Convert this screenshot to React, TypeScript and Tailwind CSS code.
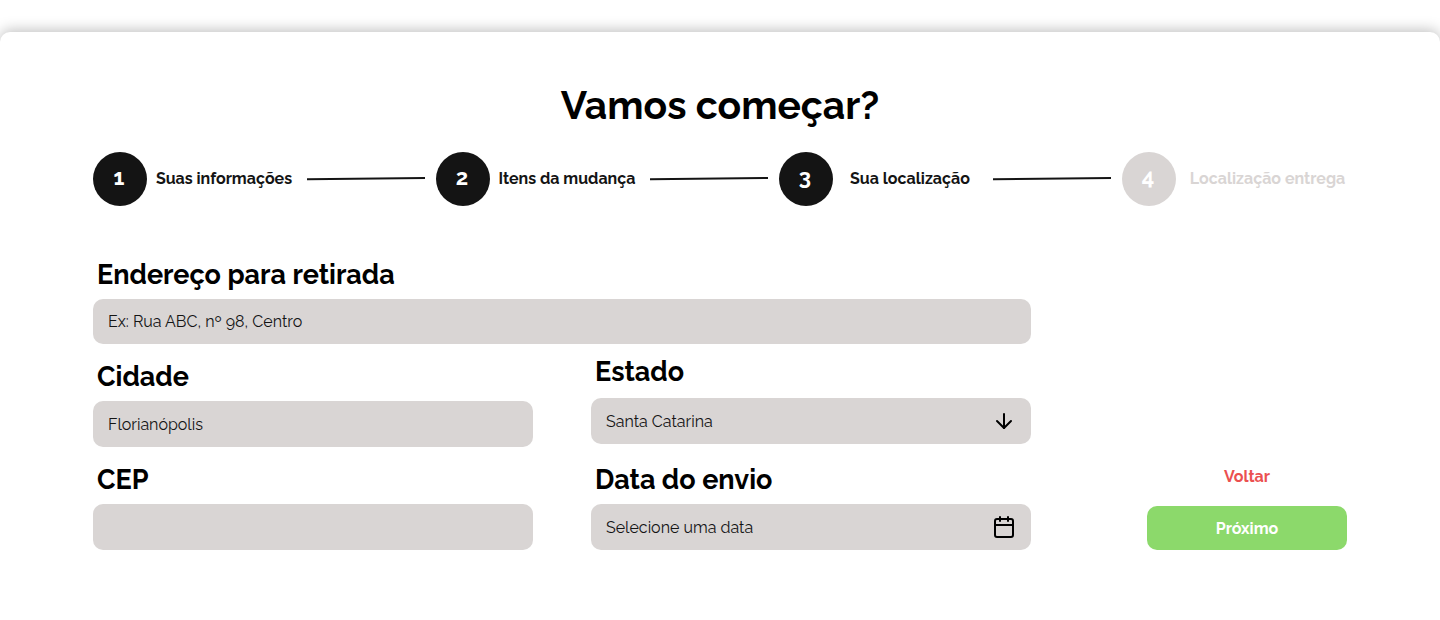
import { ArrowDown, Calendar } from "lucide-react";

type Step = { number: number; label: string; done: boolean };

const steps: Step[] = [
  { number: 1, label: "Suas informações", done: true },
  { number: 2, label: "Itens da mudança", done: true },
  { number: 3, label: "Sua localização", done: true },
  { number: 4, label: "Localização entrega", done: false },
];

const fieldClass =
  "h-[46px] w-full rounded-[10px] bg-[#d9d5d4] px-[15px] text-base text-[#141414] placeholder:text-[#141414] placeholder:opacity-100 outline-offset-2";
const labelClass = "pl-1 text-[27px] leading-8 font-bold text-black";

function Stepper() {
  return (
    <ol className="mt-[22px] flex items-center">
      {steps.map((step, index) => {
        const last = index === steps.length - 1;
        return (
          <li
            key={step.number}
            aria-current={step.number === 3 ? "step" : undefined}
            className={last ? "flex w-[225px] items-center" : "flex flex-1 items-center"}
          >
            <span
              className={
                step.done
                  ? "flex size-[54px] shrink-0 items-center justify-center rounded-full bg-[#141414] pr-0.5 pb-1 text-[22px] font-bold text-white"
                  : "flex size-[54px] shrink-0 items-center justify-center rounded-full bg-[#d9d5d4] pr-0.5 pb-1 text-[22px] font-bold text-white"
              }
            >
              {step.number}
            </span>
            <span
              className={
                step.done
                  ? "mr-1.5 flex-1 text-center text-base font-bold whitespace-nowrap text-[#141414]"
                  : "flex-1 pl-3 text-center text-base font-bold whitespace-nowrap text-[#d9d5d4]"
              }
            >
              {step.label}
            </span>
            {!last && (
              <svg
                className="mr-[11px] h-1 w-[118px] shrink-0"
                viewBox="0 0 118 4"
                fill="none"
                aria-hidden="true"
              >
                <path d="M0 2.2L118 1" stroke="#141414" strokeWidth="2" />
              </svg>
            )}
          </li>
        );
      })}
    </ol>
  );
}

export default function App() {
  return (
    <div className="bg-white pt-8 font-[Raleway,Lato,sans-serif]">
      <main className="min-h-[588px] rounded-t-[10px] bg-white px-[93px] pt-12 pb-[70px] shadow-[0_-2px_14px_rgba(0,0,0,0.25)]">
        <h1 className="text-center text-[39px] leading-[50px] font-bold text-black">
          Vamos começar?
        </h1>
        <Stepper />
        <form
          className="mt-[53px] flex items-end gap-[116px]"
          onSubmit={(event) => event.preventDefault()}
        >
          <div className="flex-1">
            <div className="flex flex-col gap-2">
              <label htmlFor="endereco" className={labelClass}>
                Endereço para retirada
              </label>
              <input
                id="endereco"
                type="text"
                placeholder="Ex: Rua ABC, nº 98, Centro"
                className="h-[45px] w-full rounded-[10px] bg-[#d9d5d4] px-[15px] text-base text-[#141414] outline-offset-2 placeholder:text-[#141414] placeholder:opacity-100"
              />
            </div>
            <div className="grid grid-cols-2 gap-[58px]">
              <div className="flex flex-col gap-[17px] pt-[17px]">
                <div className="flex flex-col gap-2">
                  <label htmlFor="cidade" className={labelClass}>
                    Cidade
                  </label>
                  <input
                    id="cidade"
                    type="text"
                    defaultValue="Florianópolis"
                    className={fieldClass}
                  />
                </div>
                <div className="flex flex-col gap-2">
                  <label htmlFor="cep" className={labelClass}>
                    CEP
                  </label>
                  <input id="cep" type="text" inputMode="numeric" className={fieldClass} />
                </div>
              </div>
              <div className="flex flex-col justify-between pt-3">
                <div className="flex flex-col gap-2.5">
                  <label htmlFor="estado" className={labelClass}>
                    Estado
                  </label>
                  <div className="relative">
                    <select
                      id="estado"
                      defaultValue="SC"
                      className={`${fieldClass} appearance-none pt-0.5`}
                    >
                      <option value="PR">Paraná</option>
                      <option value="RS">Rio Grande do Sul</option>
                      <option value="SC">Santa Catarina</option>
                    </select>
                    <ArrowDown
                      aria-hidden="true"
                      className="pointer-events-none absolute inset-y-0 right-[15px] my-auto size-6 text-black"
                    />
                  </div>
                </div>
                <div className="flex flex-col gap-2">
                  <label htmlFor="data" className={labelClass}>
                    Data do envio
                  </label>
                  <div className="relative">
                    <input
                      id="data"
                      type="text"
                      placeholder="Selecione uma data"
                      className={fieldClass}
                    />
                    <button
                      type="button"
                      aria-label="Abrir calendário"
                      className="absolute inset-y-0 right-[15px] text-black"
                    >
                      <Calendar aria-hidden="true" className="size-6" />
                    </button>
                  </div>
                </div>
              </div>
            </div>
          </div>
          <div className="flex w-[200px] shrink-0 flex-col gap-[17px]">
            <button type="button" className="h-6 text-base font-bold text-[#eb5050]">
              Voltar
            </button>
            <button
              type="submit"
              className="h-11 rounded-[10px] bg-[#8cd96b] pt-0.5 text-base font-bold text-white"
            >
              Próximo
            </button>
          </div>
        </form>
      </main>
    </div>
  );
}
